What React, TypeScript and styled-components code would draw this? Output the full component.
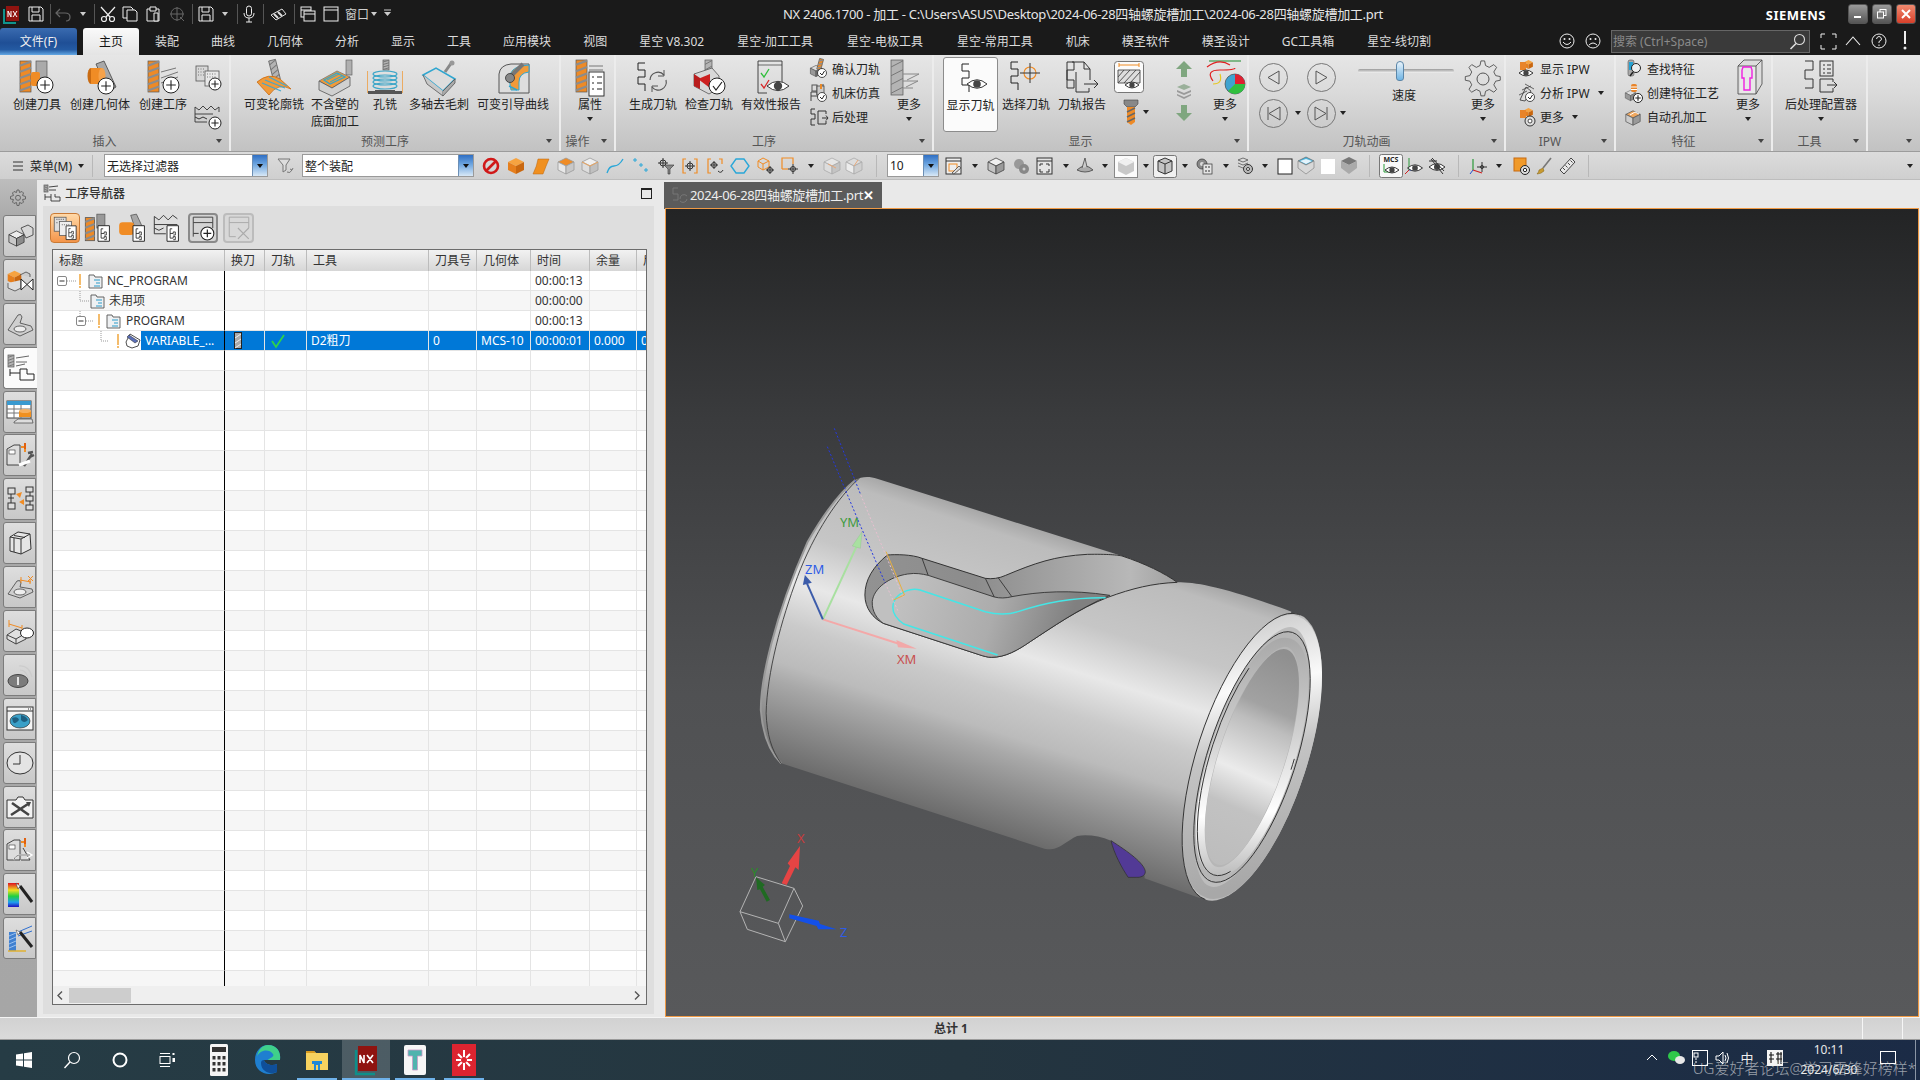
import React from 'react';
import styled, { createGlobalStyle } from 'styled-components';

const FONT = `"Noto Sans", "Noto Sans CJK SC", sans-serif`;

const GlobalStyle = createGlobalStyle`
  html, body { margin: 0; padding: 0; width: 1920px; height: 1080px; overflow: hidden; background: #d8d8d8; }
  body { font-family: ${FONT}; font-size: 12px; color: #222; }
  * { box-sizing: border-box; }
  svg { display: block; flex: none; overflow: visible; }
`;

const Page = styled.div`width: 1920px; height: 1080px; display: flex; flex-direction: column; overflow: hidden;`;

/* ---------- title bar ---------- */
const TitleBar = styled.div`height: 27px; background: #1a1a1a; display: flex; align-items: center; flex: none;`;
const Qat = styled.div`display: flex; align-items: center; width: 396px; flex: none; height: 27px;`;
const QatCell = styled.div<{ $w: number }>`width: ${p => p.$w}px; display: flex; justify-content: center; align-items: center; flex: none;`;
const QatSep = styled.div`width: 1px; height: 20px; background: #555;`;
const QatText = styled.span`color: #cfcfcf; font-size: 12px;`;
const WindowTitle = styled.div`margin-left: 387px; color: #e6e6e6; font-size: 13px; white-space: nowrap; letter-spacing: -0.3px;`;
const Brand = styled.div`margin-left: auto; color: #fff; font-weight: 700; font-size: 13px; letter-spacing: .5px; margin-right: 22px; margin-top: 3px;`;
const WinBtn = styled.div<{ $close?: boolean }>`
  width: 20px; height: 20px; margin-right: 4px; border-radius: 3px; border: 1px solid #555;
  display: flex; align-items: center; justify-content: center; color: #fff;
  background: ${p => (p.$close ? 'linear-gradient(#f08a70,#d8402a)' : 'linear-gradient(#9a9a9a,#555)')};
`;
const WinBtns = styled.div`display: flex; margin-right: 0;`;

/* ---------- tab bar ---------- */
const TabBar = styled.div`height: 28px; background: #1a1a1a; display: flex; align-items: flex-end; flex: none;`;
const FileTab = styled.div`
  width: 77px; height: 27px; margin-right: 6px; border-radius: 3px 3px 0 0; color: #f0f0f0; padding-bottom: 2px;
  background: linear-gradient(#3a6bb0 0%, #1f4f96 55%, #245aa2 80%, #63a8e4 100%);
  display: flex; align-items: center; justify-content: center; font-size: 12px;
`;
const Tab = styled.div<{ $active?: boolean; $wide?: boolean }>`
  height: 27px; padding: 0 ${p => (p.$wide ? 17 : 16)}px 2px; display: flex; align-items: center; white-space: nowrap; font-size: 12px;
  color: ${p => (p.$active ? '#111' : '#dcdcdc')};
  border-radius: 3px 3px 0 0;
  background: ${p => (p.$active ? 'linear-gradient(#fafafa,#e4e4e4)' : 'transparent')};
`;
const TabTools = styled.div`margin-left: auto; margin-right: 2px; display: flex; align-items: center; height: 28px;`;
const TabToolCell = styled.div<{ $w: number }>`width: ${p => p.$w}px; display: flex; justify-content: center; align-items: center;`;
const SearchBox = styled.div`
  width: 199px; height: 23px; border: 1px solid #666; background: #3a3a3a; color: #8a8a8a;
  display: flex; align-items: center; justify-content: space-between; padding: 0 3px 0 1px; font-size: 12px; margin: 0 6px 0 5px;
`;

/* ---------- ribbon ---------- */
const Ribbon = styled.div`
  height: 97px; flex: none; display: flex;
  background: linear-gradient(#e6e6e6 0%, #dadada 40%, #c2c2c2 100%);
  border-bottom: 1px solid #9c9c9c;
`;
const Group = styled.div<{ $w: number; $last?: boolean }>`
  width: ${p => p.$w}px; flex: none; display: flex; flex-direction: column; margin: 0;
  border-right: ${p => (p.$last ? 'none' : '2px solid #ececec')};
`;
const GroupBody = styled.div<{ $pl?: number }>`height: 77px; display: flex; padding-left: ${p => p.$pl ?? 0}px;`;
const GroupFoot = styled.div`flex: 1; display: flex; align-items: center; color: #555; font-size: 12px; padding-bottom: 1px;`;
const GroupLabel = styled.div`flex: 1; text-align: center;`;
const GroupCaretCell = styled.div`width: 20px; display: flex; justify-content: center;`;
const Caret = styled.i<{ $c?: string }>`
  display: block; width: 0; height: 0; flex: none;
  border-left: 3.5px solid transparent; border-right: 3.5px solid transparent; border-top: 4px solid ${p => p.$c ?? '#222'};
`;
const LargeBtn = styled.div<{ $w: number; $sel?: boolean; $ml?: number }>`
  width: ${p => p.$w}px; flex: none; display: flex; flex-direction: column; align-items: center; text-align: center;
  padding-top: ${p => (p.$sel ? 3 : 5)}px; line-height: 17px; font-size: 12px; color: #222;
  margin-left: ${p => p.$ml ?? 0}px;
  ${p => p.$sel && 'background:#fbfbfb;border:1px solid #8c8c8c;border-radius:3px;height:75px;margin-top:2px;'}
`;
const IconBox = styled.div`height: 36px; display: flex; align-items: center; justify-content: center;`;
const MoreCaretCell = styled.div`margin-top: 4px;`;
const IconCol = styled.div<{ $w: number; $ml?: number }>`
  width: ${p => p.$w}px; flex: none; display: flex; flex-direction: column; align-items: center; margin-left: ${p => p.$ml ?? 0}px;
`;
const SmallCol = styled(IconCol)`padding-top: 9px; gap: 10px;`;
const StackRow = styled.div`display: flex; align-items: center; gap: 4px; margin-left: 14px;`;
const ArrowCol = styled(IconCol)`padding-top: 6px; gap: 6px;`;
const StackCol = styled(IconCol)`padding-top: 6px; gap: 6px;`;
const RowsCol = styled.div<{ $w: number; $ml?: number }>`width: ${p => p.$w}px; flex: none; margin-left: ${p => p.$ml ?? 0}px; padding-top: 2px;`;
const SmallRow = styled.div`height: 24px; display: flex; align-items: center; gap: 2px; white-space: nowrap; font-size: 12px; color: #222;`;
const SmallRowIcon = styled.div`width: 22px; display: flex; justify-content: center; flex: none;`;
const SmallCaret = styled.span`margin-left: 6px;`;
const AnimGrid = styled.div`width: 91px; flex: none; display: grid; grid-template-columns: 29px 19px 29px 14px; grid-template-rows: 36px 36px; padding-top: 4px; align-items: center; justify-items: center;`;
const SliderCol = styled.div`width: 98px; margin-left: 7px; flex: none; display: flex; flex-direction: column; align-items: center; padding-top: 14px;`;
const SliderTrack = styled.div`position: relative; width: 96px; height: 4px; background: linear-gradient(#9a9a9a,#f4f4f4); border-radius: 2px;`;
const SliderThumb = styled.div`
  position: absolute; left: 38px; top: -8px; width: 8px; height: 20px; border-radius: 4px 4px 3px 3px;
  background: linear-gradient(#e9f3fb,#6fb4e4); border: 1px solid #5b86a8;
`;
const SliderLabel = styled.div`margin-top: 13px; margin-left: -4px; font-size: 12px;`;

/* ---------- selection bar ---------- */
const SelBar = styled.div`height: 28px; flex: none; display: flex; align-items: center; padding-left: 12px; background: linear-gradient(#dcdcdc,#cfcfcf); color: #222; border-bottom: 1px solid #bdbdbd;`;
const MenuText = styled.span`margin-left: 6px; font-size: 12px; width: 43px; white-space: nowrap;`;
const MenuCaret = styled.div`width: 16px; display: flex; justify-content: center;`;
const VSep = styled.div<{ $ml?: number }>`width: 1px; height: 22px; background: #f0f0f0; border-left: 1px solid #b8b8b8; margin-left: ${p => p.$ml ?? 0}px; flex: none;`;
const Combo = styled.div<{ $w: number; $ml?: number }>`
  width: ${p => p.$w}px; margin-left: ${p => p.$ml ?? 0}px; height: 23px; flex: none; background: #fff; border: 1px solid #9a9a9a;
  display: flex; align-items: center; font-size: 12px; color: #222;
`;
const ComboText = styled.div`flex: 1; padding-left: 2px; white-space: nowrap;`;
const ComboArrow = styled.div`
  width: 15px; height: 21px; display: flex; align-items: center; justify-content: center;
  background: linear-gradient(#2f6fc4 0%, #6ea6e0 45%, #d8e8f6 100%); border-left: 1px solid #6c8fb5;
`;
const FilterCell = styled.div`width: 34px; display: flex; justify-content: center; flex: none;`;
const Strip = styled.div<{ $ml: number }>`display: flex; align-items: center; margin-left: ${p => p.$ml}px; flex: none;`;
const StripCell = styled.div<{ $w: number }>`width: ${p => p.$w}px; flex: none; display: flex; justify-content: center; align-items: center;`;
const SelEnd = styled.div`margin-left: auto; margin-right: 7px;`;

/* ---------- main ---------- */
const Main = styled.div`height: 837px; flex: none; display: flex;`;
const Rail = styled.div`width: 37px; flex: none; background: linear-gradient(#bdbdbd 0, #a9a9a9 40px, #a6a6a6 100%); display: flex; flex-direction: column; align-items: flex-start;`;
const RailGear = styled.div`height: 35px; width: 36px; display: flex; align-items: center; justify-content: center; padding-top: 1px;`;
const RailBtn = styled.div<{ $active?: boolean }>`
  width: ${p => (p.$active ? 34 : 33)}px; height: 42px; margin: 0 0 1.9px 3px; flex: none;
  border: 1px solid #7c7c7c; border-radius: 3px 0 0 3px; ${p => p.$active && 'border-right:none;'}
  display: flex; align-items: center; justify-content: center;
  background: ${p => (p.$active ? '#fbfbfb' : 'linear-gradient(#dedede,#c8c8c8)')};
`;
const NavPanel = styled.div`width: 628px; flex: none; background: #e9e9e9; display: flex; flex-direction: column;`;
const NavHead = styled.div`height: 26px; flex: none; display: flex; align-items: center; padding: 0 10px 0 7px;`;
const NavTitle = styled.div`margin-left: 4px; font-size: 12px; font-weight: 500; color: #333;`;
const NavMax = styled.div`margin-left: auto; margin-right: 3px; width: 11px; height: 11px; border: 1px solid #222; border-top-width: 2px;`;
const NavInner = styled.div`margin-left: 6px; width: 611px; height: 808px; background: #dedede; padding: 7px 7px 9px 7px; display: flex; flex-direction: column;`;
const NavTools = styled.div`height: 36px; flex: none; display: flex; align-items: flex-start;`;
const NavTool = styled.div<{ $kind?: 'on' | 'box' | 'off'; $w?: number; $ml?: number }>`
  width: ${p => p.$w ?? 30}px; height: 30px; flex: none; display: flex; align-items: center; justify-content: center; border-radius: 4px;
  margin-left: ${p => p.$ml ?? 0}px;
  ${p => p.$kind === 'on' && 'background:linear-gradient(#ffd9a8,#f4954a);border:1px solid #c97a35;'}
  ${p => p.$kind === 'box' && 'background:#d4d4d4;border:2px solid #8a8a8a;'}
  ${p => p.$kind === 'off' && 'background:#d8d8d8;border:2px solid #bcbcbc;'}
`;
const Table = styled.div`flex: 1; min-height: 0; background: #fff; border: 1px solid #6c6c6c; display: flex; flex-direction: column; margin-left: 2px; width: 595px;`;
const COLS = '172px 40px 42px 122px 48px 54px 59px 47px 12px';
const HeadRow = styled.div`height: 21px; flex: none; display: grid; grid-template-columns: ${COLS}; background: linear-gradient(#f2f2f2,#d6d6d6); overflow: hidden;`;
const HeadCell = styled.div`border-right: 1px solid #bcbcbc; padding-left: 6px; line-height: 21px; font-size: 12px; color: #333; white-space: nowrap; overflow: hidden;`;
const Rows = styled.div`flex: 1; min-height: 0; overflow: hidden;`;
const Row = styled.div<{ $alt?: boolean; $sel?: boolean }>`
  height: 20px; display: grid; grid-template-columns: ${COLS};
  background: ${p => (p.$sel ? '#0078d7' : p.$alt ? '#f6f6f6' : '#fff')};
  color: ${p => (p.$sel ? '#fff' : '#333')};
`;
const Cell = styled.div<{ $pl?: number }>`
  border-right: 1px solid #e4e4e4; border-bottom: 1px solid #e4e4e4; padding-left: ${p => p.$pl ?? 4}px; font-size: 12px; line-height: 19px;
  white-space: nowrap; overflow: hidden; display: flex; align-items: center;
`;
const TreeCell = styled.div`
  border-right: 1px solid #000; border-bottom: 1px solid #e4e4e4; display: flex; align-items: center; font-size: 12px; line-height: 19px; background: #fff; color: #333;
  white-space: nowrap; overflow: hidden;
`;
const TreeCellAlt = styled(TreeCell)`background: #f6f6f6;`;
const TreeLabel = styled.span`margin-left: 1px;`;
const TreeSelected = styled.div`flex: 1; align-self: stretch; background: #0078d7; color: #fff; padding-left: 4px; display: flex; align-items: center;`;
const ScrollBar = styled.div`height: 18px; flex: none; background: #efefef; display: flex; align-items: center; padding-left: 4px; padding-right: 6px;`;
const ScrollThumb = styled.div`width: 62px; height: 15px; background: #cdcdcd; margin-left: 6px;`;
const ScrollEnd = styled.div`margin-left: auto;`;
const GraphicsCol = styled.div`flex: 1; display: flex; flex-direction: column; background: #e9e9e9;`;
const TabStrip = styled.div`height: 28px; flex: none; display: flex; align-items: flex-end; border-bottom: 0; padding-top: 1px;`;
const DocTab = styled.div`
  width: 218px; height: 27px; background: #5b5b5b; color: #eee; display: flex; align-items: center; font-size: 13px; margin-left: -1px; white-space: nowrap; padding-left: 7px; margin-bottom: -1px;
`;
const DocText = styled.span`margin-left: 1px; letter-spacing: -0.35px; padding-bottom: 2px;`;
const DocClose = styled.span`margin-left: auto; margin-right: 8px; font-weight: 700; font-size: 13px; color: #fff; padding-bottom: 2px;`;
const Viewport = styled.div`
  margin: 0 1px 0 0; flex: 1; min-height: 0; border: 1px solid #f09a45;
  background: linear-gradient(#232425 0%, #3a3b3d 26%, #505153 60%, #58595b 100%);
`;

/* ---------- status + taskbar ---------- */
const StatusBar = styled.div`height: 23px; flex: none; display: flex; background: linear-gradient(#d2d2d2,#dadada); border-top: 1px solid #f4f4f4; border-bottom: 1px solid #9a9a9a;`;
const StatusMain = styled.div`width: 1862px; padding-left: 40px; text-align: center; font-weight: 700; font-size: 12px; line-height: 21px; color: #333;`;
const StatusCell = styled.div<{ $w: number }>`width: ${p => p.$w}px; border-left: 1px solid #f6f6f6;`;
const Taskbar = styled.div`position: relative; height: 40px; flex: none; display: flex; align-items: center; background: linear-gradient(90deg,#263c45 0%,#24353f 50%,#1b2b46 100%);`;
const TaskCell = styled.div<{ $w: number; $on?: boolean; $line?: boolean }>`
  width: ${p => p.$w}px; height: 40px; flex: none; display: flex; align-items: center; justify-content: center;
  background: ${p => (p.$on ? 'rgba(255,255,255,.18)' : 'transparent')};
  box-shadow: ${p => (p.$line ? 'inset 0 -2px 0 #6fb2ea' : 'none')};
`;
const TaskGap = styled.div<{ $w: number }>`width: ${p => p.$w}px; flex: none;`;
const Tray = styled.div`margin-left: auto; display: flex; align-items: center; height: 40px;`;
const TrayCell = styled.div<{ $w: number; $pr?: number }>`width: ${p => p.$w}px; padding-right: ${p => p.$pr ?? 0}px; display: flex; justify-content: center; align-items: center; color: #eee; font-size: 13px; margin-top: -5px;`;
const Clock = styled.div`width: 78px; text-align: center; color: #e8e8e8; font-size: 12px; line-height: 20px;`;
const TrayEnd = styled.div`width: 5px; height: 40px; border-left: 1px solid #8a95a5;`;
const Watermark = styled.div`position: absolute; right: 4px; bottom: 2px; color: rgba(235,235,235,.62); font-size: 15px; line-height: 20px; white-space: nowrap; font-weight: 300;`;

/* ---------- icon helpers ---------- */
const Mill = ({ x, y, w, h, n = 5 }: { x: number; y: number; w: number; h: number; n?: number }) => {
  const s = h / n;
  return (
    <g>
      <rect x={x} y={y} width={w} height={h} fill="#ee8a26" stroke="#555" strokeWidth=".7" />
      {Array.from({ length: n }).map((_, i) => (
        <path key={i} d={`M${x} ${y + i * s + s * 0.75}L${x + w} ${y + i * s + s * 0.1}`} stroke="#8c8c8c" strokeWidth={s * 0.35} />
      ))}
    </g>
  );
};
const GMill = ({ x, y, w, h }: { x: number; y: number; w: number; h: number }) => (
  <g>
    <rect x={x} y={y} width={w} height={h} fill="#b4b4b4" stroke="#555" strokeWidth=".7" />
    {[0, 1, 2, 3].map(i => <path key={i} d={`M${x} ${y + (i + .8) * h / 4}L${x + w} ${y + (i + .1) * h / 4}`} stroke="#777" strokeWidth="1" />)}
  </g>
);
const Plus = ({ x, y, r = 8 }: { x: number; y: number; r?: number }) => (
  <g>
    <circle cx={x} cy={y} r={r} fill="#fff" stroke="#222" strokeWidth="1" />
    <path d={`M${x - r * .6} ${y}H${x + r * .6}M${x} ${y - r * .6}V${y + r * .6}`} stroke="#222" strokeWidth="1.1" />
  </g>
);
const Eye = ({ x, y, w = 12 }: { x: number; y: number; w?: number }) => (
  <g>
    <path d={`M${x - w} ${y}Q${x} ${y - w * .85} ${x + w} ${y}Q${x} ${y + w * .85} ${x - w} ${y}Z`} fill="#fff" stroke="#222" strokeWidth=".9" />
    <circle cx={x} cy={y} r={w * .38} fill="#444" />
  </g>
);
const PathS = ({ x = 0, y = 0, c = '#222' }: { x?: number; y?: number; c?: string }) => (
  <path transform={`translate(${x} ${y})`} d="M8 0H1V7H8V14H1V21H8V28" fill="none" stroke={c} strokeWidth="1" />
);
const Doc = ({ x, y, s = 1 }: { x: number; y: number; s?: number }) => (
  <g transform={`translate(${x} ${y}) scale(${s})`}>
    <path d="M0 0H11L11 15H0Z" fill="#fff" stroke="#222" strokeWidth=".9" />
    <path d="M3 3H5M3 3V12M3 7.5H6V6H8V9H6M3 12H6V10.5H8V13.5H6" fill="none" stroke="#222" strokeWidth=".8" />
  </g>
);
const Svg = ({ s = 20, h, vb, children }: { s?: number; h?: number; vb?: string; children: React.ReactNode }) => (
  <svg width={s} height={h ?? s} viewBox={vb ?? `0 0 ${s} ${h ?? s}`}>{children}</svg>
);
const Cube = ({ x = 0, y = 0, s = 1, t = '#f6a340', l = '#e67f1d', r = '#c9670f', e = 'none' }: any) => (
  <g transform={`translate(${x} ${y}) scale(${s})`} stroke={e} strokeWidth=".8">
    <path d="M10 2L18 6L10 10L2 6Z" fill={t} />
    <path d="M2 6L10 10V18L2 14Z" fill={l} />
    <path d="M18 6L10 10V18L18 14Z" fill={r} />
  </g>
);

const L: Record<string, React.ReactNode> = {
  createTool: <Svg s={40} h={36}><Mill x={3} y={1} w={11} h={31} /><rect x={19} y={1} width={11} height={17} fill="#aaa" stroke="#555" strokeWidth=".7" /><rect x={14} y={12} width={9} height={14} rx="2" fill="#f08c25" /><Plus x={28} y={25} /></Svg>,
  createGeom: <Svg s={40} h={36}><path d="M16 4L24 1L36 27L28 32Z" fill="#a8a8a8" stroke="#444" strokeWidth=".8" /><ellipse cx={11} cy={16} rx={3.5} ry={8} fill="#c96b12" /><rect x={11} y={8} width={11} height={16} fill="#f08c25" /><ellipse cx={22} cy={16} rx={3.5} ry={8} fill="#f6a24a" /><Plus x={26} y={26} /></Svg>,
  createOp: <Svg s={40} h={36}><Mill x={5} y={1} w={11} h={31} /><path d="M18 12L33 8M18 18L35 12M18 23L35 17" stroke="#777" strokeWidth="1" fill="none" /><Plus x={28} y={25} /></Svg>,
  ops1: <Svg s={30} h={28}><rect x={3} y={2} width={12} height={15} fill="#d8d8d8" stroke="#555" strokeWidth=".8" /><rect x={12} y={7} width={14} height={15} fill="#e8e8e8" stroke="#555" strokeWidth=".8" /><path d="M5 5H12M5 8H12M5 11H12M14 10H24M14 13H24" stroke="#777" strokeDasharray="1 1.5" /><Plus x={22} y={20} r={6} /></Svg>,
  ops2: <Svg s={30} h={28}><path d="M2 5L6 8L10 4L14 8L18 4L22 8L26 5" fill="none" stroke="#333" strokeWidth=".9" /><path d="M2 5V20H14M26 5V10M2 12H20" fill="none" stroke="#333" strokeWidth=".9" /><path d="M2 15L6 17L10 15L14 17" fill="none" stroke="#333" /><Plus x={22} y={21} r={6} /></Svg>,
  vc: <Svg s={40} h={36}><g transform="rotate(-14 20 10)"><GMill x={17} y={0} w={7} h={20} /></g><path d="M3 22Q15 12 26 19L37 29Q24 22 15 35Z" fill="#f09a3a" stroke="#c96b12" strokeWidth=".8" /><path d="M8 23L27 31M11 20L31 28M15 17L33 26" stroke="#45a6cc" strokeWidth="1.2" fill="none" /></Svg>,
  floor: <Svg s={40} h={36}><rect x={31} y={0} width={6} height={15} fill="#b0b0b0" stroke="#555" strokeWidth=".6" /><path d="M4 21L22 11L35 17L17 28Z" fill="#f09a3a" stroke="#777" strokeWidth=".8" /><path d="M4 21V30L17 36L35 26V17L17 28Z" fill="#d0d0d0" stroke="#555" strokeWidth=".8" /><path d="M9 20L22 13L30 17L15 24Z" fill="none" stroke="#2fa6d0" strokeWidth="1.2" /><path d="M12 20L24 14M15 22L27 16" stroke="#2fa6d0" /></Svg>,
  hole: <Svg s={40} h={36}><GMill x={18} y={0} w={6} h={10} /><path d="M3 11V33M37 11V33" stroke="#f09a3a" strokeWidth="1.5" /><path d="M3 32H37" stroke="#555" strokeWidth="4" /><rect x={3} y={11} width={7} height={20} fill="#ddd" /><rect x={30} y={11} width={7} height={20} fill="#ddd" />{[14, 18, 22, 26].map(y => <ellipse key={y} cx={20} cy={y} rx={12} ry={3} fill="none" stroke="#3da6c8" strokeWidth="1.2" />)}</Svg>,
  deburr: <Svg s={40} h={36}><path d="M26 12L33 2" stroke="#888" strokeWidth="3" /><circle cx={33} cy={3} r={2.5} fill="#999" /><path d="M4 15L17 8L36 19L24 31Z" fill="#ddd" stroke="#2fa6d0" strokeWidth="1.5" /><path d="M4 15L8 24L24 36L24 31" fill="#c8c8c8" stroke="#555" strokeWidth=".8" /><path d="M24 31L36 19V23L24 36" fill="#aaa" stroke="#555" strokeWidth=".8" /></Svg>,
  guide: <Svg s={40} h={36}><path d="M6 33V14Q7 5 18 4H36V33Z" fill="#ddd" stroke="#555" strokeWidth="1" /><path d="M16 18Q18 8 28 6L36 5V12Q26 13 26 22L26 30H18Z" fill="#f09a3a" stroke="#2fa6d0" strokeWidth="1" /><path d="M18 16L30 4" stroke="#777" strokeWidth="4" /><circle cx={17} cy={18} r={4.5} fill="#888" stroke="#333" strokeWidth=".8" /><path d="M16 26L24 30" stroke="#2fa6d0" strokeWidth="1.4" /></Svg>,
  prop: <Svg s={40} h={36}><Mill x={6} y={0} w={11} h={32} /><path d="M19 6H33M19 10H33" stroke="#777" /><rect x={19} y={12} width={15} height={24} fill="#fff" stroke="#222" strokeWidth=".9" /><path d="M22 17H24M27 17H32M22 23H24M27 23H32M22 29H24M27 29H32" stroke="#222" strokeWidth="1" /></Svg>,
  gen: <Svg s={40} h={36}><PathS x={4} y={3} /><path d="M17 20A8 8 0 0 1 31 15M33 20A8 8 0 0 1 19 27" fill="none" stroke="#555" strokeWidth="1.2" /><path d="M31 10V16H25M19 32V26H25" fill="none" stroke="#555" strokeWidth="1" /></Svg>,
  check: <Svg s={40} h={36}><GMill x={16} y={0} w={7} h={22} /><path d="M5 14L23 8L30 16V28L20 34L5 26Z" fill="#d8d8d8" stroke="#555" strokeWidth=".8" /><path d="M9 19L21 14L21 28Z" fill="#cc2020" /><path d="M5 14V26L11 29V18Z" fill="#b91d1d" /><circle cx={28} cy={26} r={8} fill="#fff" stroke="#222" /><path d="M24 26L27 30L33 22" fill="none" stroke="#222" strokeWidth="1.2" /></Svg>,
  valid: <Svg s={40} h={36}><path d="M7 1H31V25" fill="none" stroke="#333" strokeWidth=".9" /><path d="M7 1V33H16" fill="none" stroke="#333" strokeWidth=".9" /><path d="M7 5H31" stroke="#333" strokeWidth=".7" /><path d="M10 13L13 17L18 9" fill="none" stroke="#2fbf3b" strokeWidth="1.3" /><path d="M10 24L13 28L18 20" fill="none" stroke="#d62a2a" strokeWidth="1.3" /><Eye x={27} y={26} w={11} /></Svg>,
  more1: <Svg s={40} h={36}><GMill x={2} y={0} w={12} h={35} /><path d="M14 14H30L18 20M14 21H29L17 27M14 28H24" fill="none" stroke="#888" strokeWidth="1" /></Svg>,
  showPath: <Svg s={40} h={32}><PathS x={10} y={1} /><Eye x={26} y={21} w={10} /></Svg>,
  pick: <Svg s={40} h={36}><PathS x={4} y={2} /><circle cx={24} cy={13} r={6} fill="none" stroke="#f08c25" strokeWidth="1.1" /><path d="M14 13H34M24 3V23" stroke="#333" strokeWidth="1" /></Svg>,
  report: <Svg s={40} h={36}><path d="M5 2H12V10H5V20H12V28H5Z" fill="none" stroke="#333" /><path d="M10 2H22L28 9V20M10 2" fill="none" stroke="#333" /><path d="M22 2V9H28" fill="none" stroke="#333" /><path d="M14 12V32H27V28" fill="none" stroke="#333" /><path d="M22 24H36M32 20L36 24L32 28" fill="none" stroke="#333" /></Svg>,
  gear: <Svg s={40} h={36}><path d="M18 2H22L23 7L27 9L32 6L35 9L32 14L34 18L39 19V23L34 24L32 28L35 33L32 36L27 33L23 35L22 40H18L17 35L13 33L8 36L5 33L8 28L6 24L1 23V19L6 18L8 14L5 9L8 6L13 9L17 7Z" transform="scale(.92) translate(1.5 -1)" fill="none" stroke="#444" strokeWidth=".9" /><circle cx={20} cy={19} r={6} fill="none" stroke="#444" strokeWidth=".9" /></Svg>,
  legend: <Svg s={40} h={36}><path d="M4 1H36" stroke="#1a8a2a" strokeWidth="1" /><path d="M2 7Q14 -2 25 5M8 21Q0 10 15 10T30 8" fill="none" stroke="#e02020" strokeWidth="1.2" /><path d="M8 24Q18 24 15 14" fill="none" stroke="#e8c820" strokeWidth="1.2" /><circle cx={30} cy={24} r={10} fill="#3fa3d0" stroke="#333" strokeWidth=".6" /><path d="M30 24V14A10 10 0 0 1 40 24Z" fill="#e02030" /><path d="M30 24H40A10 10 0 0 1 23 31Z" fill="#30c040" /></Svg>,
  feat: <Svg s={32} h={36}><path d="M6 6L12 0H30V24L24 34H6Z" fill="#ddd" stroke="#444" strokeWidth=".8" /><path d="M24 6V34M24 6L30 0M6 6H24" stroke="#444" strokeWidth=".8" fill="#aaa" /><rect x={8} y={7} width={15} height={26} fill="#e8e8e8" /><path d="M11 7H19L20 10V18H18V30H12V18H10V10Z" fill="none" stroke="#f020e0" strokeWidth="1.4" /></Svg>,
  post: <Svg s={40} h={36}><path d="M4 1H12V10H4V19H12V28H4" fill="none" stroke="#333" /><rect x={19} y={1} width={13} height={15} fill="none" stroke="#333" /><path d="M22 5H24M26 5H30M22 9H24M26 9H30M22 13H24M26 13H30" stroke="#333" /><path d="M19 19V32H32V28M19 19H32V22M26 25H36M33 22L36 25L33 28" fill="none" stroke="#333" /></Svg>,
};

const S: Record<string, React.ReactNode> = {
  check1: <Svg s={20}><Cube s={.7} y={5} t="#ddd" l="#999" r="#777" e="#444" /><g transform="rotate(15 12 6)"><Mill x={9} y={0} w={4} h={11} n={3} /></g><circle cx={13} cy={14} r={4.5} fill="#fff" stroke="#222" strokeWidth=".8" /><path d="M11 14L13 16L15.5 12" fill="none" stroke="#222" /></Svg>,
  check2: <Svg s={20}><rect x={3} y={2} width={5} height={6} fill="none" stroke="#555" /><path d="M2 18V9H8V14M2 13H7M14 1V5" stroke="#444" fill="none" /><rect x={8} y={3} width={7} height={9} fill="#ccc" stroke="#444" strokeWidth=".8" /><rect x={11} y={1} width={2} height={5} fill="#e88a2a" /><circle cx={13} cy={14} r={4.5} fill="#fff" stroke="#222" strokeWidth=".8" /><path d="M11 14L13 16L15.5 12" fill="none" stroke="#222" /></Svg>,
  check3: <Svg s={20}><path d="M6 2H2V7H6V12H2V18H6" fill="none" stroke="#333" /><path d="M9 4V17H17V14M9 4H17V7M13 11H19M17 8.5L19 11L17 13.5" fill="none" stroke="#333" /></Svg>,
  ipw1: <Svg s={20}><Cube x={6} y={0} s={.55} /><rect x={3} y={3} width={6} height={8} fill="#e8842a" /><Eye x={9} y={14} w={7} /></Svg>,
  ipw2: <Svg s={20}><path d="M3 17L9 4L14 8L8 18Z" fill="#ddd" stroke="#333" strokeWidth=".8" /><path d="M8 1L17 6M5 7L14 3M2 12L10 8" stroke="#444" strokeWidth=".8" /><circle cx={13} cy={14} r={4.5} fill="#fff" stroke="#222" strokeWidth=".8" /><path d="M11 14L13 16L15.5 12" fill="none" stroke="#222" /></Svg>,
  ipw3: <Svg s={20}><Cube x={6} y={0} s={.55} /><rect x={3} y={3} width={6} height={8} fill="#e8842a" /><circle cx={13} cy={14} r={5} fill="#ddd" stroke="#222" strokeWidth=".9" /><circle cx={13} cy={14} r={2} fill="#fff" stroke="#222" strokeWidth=".8" /></Svg>,
  find: <Svg s={20}><rect x={4} y={1} width={6} height={16} rx="2" fill="#aaa" stroke="#555" strokeWidth=".6" /><rect x={5} y={3} width={4} height={8} fill="#27a3d4" /><circle cx={12} cy={9} r={4.5} fill="#eee" stroke="#222" /><path d="M9 13L6 17" stroke="#222" strokeWidth="1.4" /></Svg>,
  craft: <Svg s={20}><Cube y={6} s={.65} t="#ddd" l="#999" r="#888" e="#555" /><rect x={7} y={1} width={6} height={8} rx="2" fill="#e8842a" /><path d="M7 4H13M7 6.5H13" stroke="#fff" /><Plus x={14} y={15} r={4.5} /></Svg>,
  auto: <Svg s={20}><Cube y={2} s={.9} t="#f0a860" l="#ccc" r="#999" e="#555" /><path d="M6 8L11 5L15 7" stroke="#fff" fill="none" /></Svg>,
  box1: <Svg s={30} h={32}><rect x=".5" y=".5" width="29" height="31" rx="3" fill="#fbfbfb" stroke="#777" /><path d="M5 4H25M5 2V6M25 2V6" stroke="#f08c25" strokeWidth="1" /><path d="M4 9H26V22H4Z" fill="#ddd" stroke="#333" strokeWidth=".8" /><path d="M4 16L10 9M4 22L16 9M10 22L22 9M16 22L26 11" stroke="#444" strokeWidth=".9" /><Eye x={18} y={24} w={7} /></Svg>,
  screw: <Svg s={16} h={26}><path d="M1 1H15V5L12 8H4L1 5Z" fill="#888" stroke="#444" strokeWidth=".6" /><rect x={4} y={8} width={8} height={15} fill="#ee8a26" /><path d="M4 13L12 9M4 18L12 14M4 23L12 19" stroke="#666" strokeWidth="1.4" /><path d="M4 23L8 26L12 23" fill="#ee8a26" /></Svg>,
  up: <Svg s={18} h={16}><path d="M9 0L17 8H12V16H6V8H1Z" fill="#7fa67f" /></Svg>,
  down: <Svg s={18} h={16}><path d="M9 16L17 8H12V0H6V8H1Z" fill="#7fa67f" /></Svg>,
  layers: <Svg s={18} h={16}><path d="M9 1L16 4L9 7L2 4Z" fill="#9ab09a" /><path d="M2 7L9 10L16 7V9L9 12L2 9ZM2 11L9 14L16 11V12.5L9 16L2 12.5Z" fill="#9a9a9a" /></Svg>,
};

const circleIcon = (d: string) => (
  <Svg s={29}><circle cx={14.5} cy={14.5} r={14} fill="none" stroke="#777" strokeWidth="1" /><path d={d} fill="none" stroke="#555" strokeWidth="1" /></Svg>
);

const T: Record<string, React.ReactNode> = {
  no: <Svg><circle cx={10} cy={10} r={7} fill="none" stroke="#d01818" strokeWidth="2.6" /><path d="M5 15L15 5" stroke="#d01818" strokeWidth="2.6" /></Svg>,
  cubeO: <Svg><Cube /></Svg>,
  facet: <Svg><path d="M7 3H18Q15 10 12 18H2Q6 10 7 3Z" fill="#f09020" stroke="#b86410" strokeWidth=".5" /></Svg>,
  cubeT: <Svg><Cube t="#f08c25" l="#e8e8e8" r="#c8c8c8" e="#999" /></Svg>,
  cubeW: <Svg><Cube t="#efefef" l="#ddd" r="#c0c0c0" e="#999" /><path d="M2 6L10 10L18 6" fill="none" stroke="#f0a860" /></Svg>,
  curve: <Svg><path d="M2 17Q4 10 9 10T18 3" fill="none" stroke="#2aa7d8" strokeWidth="1.3" /></Svg>,
  pts: <Svg><path d="M3 4H7M5 2V6M9 9H13M11 7V11M14 14H18M16 12V16" stroke="#2aa7d8" strokeWidth="1" /></Svg>,
  tgtF: <Svg><circle cx={7} cy={7} r={3} fill="none" stroke="#333" /><path d="M2 7H12M7 2V12" stroke="#333" /><path d="M8 9H18L14 13V18H12V13Z" fill="#888" stroke="#333" strokeWidth=".6" /></Svg>,
  brk: <Svg><path d="M6 3H3V17H6M14 3H17V17H14" fill="none" stroke="#f08c25" strokeWidth="1.2" /><circle cx={10} cy={10} r={3} fill="none" stroke="#333" /><path d="M5 10H15M10 5V15" stroke="#333" /></Svg>,
  brk2: <Svg><path d="M6 3H3V17H6M14 3H17V8" fill="none" stroke="#f08c25" strokeWidth="1.2" /><circle cx={9} cy={9} r={2.5} fill="none" stroke="#333" /><path d="M5 9H13M9 5V13" stroke="#333" /><path d="M13 15Q16 18 18 14" fill="none" stroke="#333" /></Svg>,
  hex: <Svg><path d="M6 3H14L19 10L14 17H6L1 10Z" fill="none" stroke="#2aa7d8" strokeWidth="1.4" /></Svg>,
  cubeX: <Svg><path d="M2 5L7 2L13 5V11L7 14L2 11ZM2 5L7 8L13 5M7 8V14" fill="none" stroke="#f08c25" /><circle cx={14} cy={14} r={2.5} fill="none" stroke="#333" /><path d="M10 14H18M14 10V18" stroke="#333" /></Svg>,
  sqX: <Svg><path d="M2 13V2H13V8" fill="none" stroke="#f08c25" strokeWidth="1.2" /><path d="M2 13H8" stroke="#f08c25" strokeWidth="1.2" /><circle cx={13} cy={13} r={2.5} fill="none" stroke="#333" /><path d="M8 13H18M13 8V18" stroke="#333" /></Svg>,
  g1: <Svg><Cube t="#e6e6e6" l="#ddd" r="#c4c4c4" e="#aaa" /><path d="M6 8L14 12" stroke="#e8a878" strokeWidth="1" /></Svg>,
  g2: <Svg><Cube t="#ddd" l="#ececec" r="#cfcfcf" e="#aaa" /><path d="M10 10L14 4" stroke="#e8a878" /></Svg>,
  win: <Svg><rect x={2} y={2} width={15} height={16} fill="#eee" stroke="#333" /><path d="M2 5H17" stroke="#333" /><rect x={5} y={8} width={8} height={7} fill="none" stroke="#f08c25" /><path d="M8 17L15 10L17 12L10 18Z" fill="#ddd" stroke="#333" strokeWidth=".7" /></Svg>,
  gcube: <Svg><Cube t="#efefef" l="#c4c4c4" r="#9a9a9a" e="#444" /></Svg>,
  gears: <Svg><circle cx={8} cy={8} r={5} fill="#999" /><circle cx={13} cy={13} r={5} fill="#888" /><circle cx={13} cy={13} r={1.5} fill="#ccc" /></Svg>,
  fit: <Svg><rect x={2} y={2} width={15} height={16} fill="#e4e4e4" stroke="#333" /><path d="M2 5H17" stroke="#333" /><path d="M5 8H8M5 8V10M14 8H11M14 8V10M5 16H8M5 16V13M14 16H11M14 16V13" stroke="#333" fill="none" /></Svg>,
  cone: <Svg><path d="M2 14Q10 6 18 14Q10 18 2 14Z" fill="#aaa" stroke="#444" strokeWidth=".8" /><path d="M7 12L10 2L12 11" fill="#ccc" stroke="#444" strokeWidth=".8" /></Svg>,
  shaded: <Svg s={24} h={24}><rect x=".5" y="1.5" width="23" height="22" fill="#fbfbfb" stroke="#888" /><path d="M12 4L20 8V17L12 21L4 17V8Z" fill="#c8c8c8" /><path d="M4 8L12 12L20 8L12 4Z" fill="#f0f0f0" /></Svg>,
  cylbox: <Svg s={24} h={24}><rect x=".5" y="1.5" width="23" height="22" rx="2" fill="#f0f0f0" stroke="#777" /><path d="M5 7L12 4L19 7V17L12 20L5 17Z" fill="#c4c4c4" stroke="#333" /><path d="M5 7L12 10L19 7M12 10V20" fill="none" stroke="#333" /></Svg>,
  layer: <Svg><circle cx={7} cy={8} r={5} fill="#888" stroke="#333" strokeWidth=".7" /><circle cx={7} cy={8} r={2} fill="#ddd" /><rect x={8} y={8} width={9} height={10} fill="#e4e4e4" stroke="#333" strokeWidth=".7" /><path d="M11 10V12M14 10V12M11 14V16M14 14V16" stroke="#333" /></Svg>,
  gearstack: <Svg><path d="M3 4L8 2L13 4L8 6ZM3 7L8 9L13 7M3 10L8 12L13 10" fill="#ddd" stroke="#444" strokeWidth=".7" /><circle cx={13} cy={13} r={4.5} fill="#bbb" stroke="#333" /><circle cx={13} cy={13} r={1.5} fill="#fff" stroke="#333" /></Svg>,
  wbox: <Svg><rect x={3} y={3} width={14} height={15} fill="#fff" stroke="#222" /></Svg>,
  eyecube: <Svg><path d="M10 1L18 5L10 9L2 5Z" fill="#4fb8e0" stroke="#555" strokeWidth=".6" /><path d="M4 5L10 3L16 5L10 8Z" fill="#e4f3fb" /><path d="M2 5V12L10 18L18 12V5L10 9Z" fill="#d8d8d8" stroke="#777" strokeWidth=".6" /></Svg>,
  wsq: <Svg><rect x={3} y={3} width={14} height={15} fill="#fff" /></Svg>,
  graycube: <Svg><path d="M10 1L18 5L10 9L2 5Z" fill="#777" /><path d="M2 5V12L10 18L18 12V5L10 9Z" fill="#aaa" /></Svg>,
  mcs: <Svg s={24} h={24}><rect x=".5" y=".5" width="23" height="23" rx="2" fill="#f8f8f8" stroke="#777" /><text x="12" y="8" fontSize="7" textAnchor="middle" fill="#222" fontFamily="Noto Sans" fontWeight="700">MCS</text><path d="M5 10V18M5 18H13" stroke="#2a9a3a" /><Eye x={13} y={16} w={7} /></Svg>,
  eyeaxis: <Svg><path d="M5 2V14" stroke="#2a9a3a" /><path d="M5 14L1 18" stroke="#d02020" /><path d="M5 14H9" stroke="#2050d0" /><Eye x={11} y={12} w={7.5} /></Svg>,
  eyeoff: <Svg><Eye x={10} y={11} w={8} /><path d="M4 3L16 18M2 5H10M5 2L17 15" stroke="#333" /></Svg>,
  axes: <Svg><path d="M4 14V3" stroke="#2a9a3a" strokeWidth="1.2" /><path d="M4 14L13 17" stroke="#d02020" strokeWidth="1.2" /><path d="M4 14L1 18" stroke="#2050d0" /><circle cx={13} cy={11} r={1.5} fill="none" stroke="#333" /><path d="M8 11H18M13 6V16" stroke="#333" /></Svg>,
  ocube: <Svg><rect x={3} y={2} width={12} height={13} fill="#f09a2a" stroke="#c86a10" /><circle cx={14} cy={14} r={4.5} fill="#ddd" stroke="#222" /><circle cx={14} cy={14} r={1.7} fill="#fff" stroke="#222" /></Svg>,
  brush: <Svg><path d="M17 2L9 12" stroke="#777" strokeWidth="1.6" /><path d="M5 14L9 12L10 15Q7 18 3 18Q5 16 5 14Z" fill="#c89a30" stroke="#806010" strokeWidth=".5" /></Svg>,
  ruler: <Svg><path d="M3 14L14 2L18 6L7 18Z" fill="#e8e8e8" stroke="#444" /><path d="M6 12L8 14M8.500 9.500L10.500 11.500M11 7L13 9M13.500 4.500L15.500 6.500" stroke="#444" /></Svg>,
};

const R: Record<string, React.ReactNode> = {
  r1: <Svg s={28}><Cube x={1} y={7} s={.95} t="#ececec" l="#c8c8c8" r="#8c8c8c" e="#333" /><path d="M15 6L22 3L27 6V13L20 16Z" fill="#d8d8d8" stroke="#333" strokeWidth=".8" /></Svg>,
  r2: <Svg s={28}><Cube x={0} y={3} s={.85} /><path d="M14 9L20 6L24 8V11" fill="#ccc" stroke="#333" strokeWidth=".7" /><path d="M2 17V22L9 25L15 22V14" fill="#ddd" stroke="#333" strokeWidth=".7" /><path d="M15 13L27 24V13L15 24Z" fill="#fff" stroke="#222" strokeWidth="1" /></Svg>,
  r3: <Svg s={28}><path d="M2 20L12 5Q15 3 16 7L14 13L25 16L27 20L14 26Z" fill="#cfcfcf" stroke="#444" strokeWidth=".8" /><ellipse cx={14} cy={19} rx={6} ry={3} fill="#eee" stroke="#444" strokeWidth=".8" /></Svg>,
  r4: <Svg s={28}><GMill x={1} y={1} w={6} h={12} /><path d="M9 4L22 2M9 8H20M9 12L18 10" stroke="#666" /><path d="M3 15V22M3 19H13M13 15V26H27V20H20V15Z" fill="none" stroke="#222" strokeWidth="1" /></Svg>,
  r5: <Svg s={28}><rect x={1} y={3} width={24} height={17} fill="#fff" stroke="#444" /><rect x={1} y={3} width={24} height={4} fill="#3a9ad0" /><path d="M1 11H25M1 15H25M8 7V20M15 7V20" stroke="#777" /><ellipse cx={19} cy={17} rx={6} ry={2} fill="#f09020" /><rect x={13} y={13} width={12} height={6} fill="#f09020" /><ellipse cx={19} cy={13} rx={6} ry={2} fill="#f6b060" /><path d="M8 24L12 21H26L27 25H8Z" fill="#ddd" stroke="#444" strokeWidth=".7" /></Svg>,
  r6: <Svg s={28}><path d="M1 24V8L8 4H14V24Z" fill="#ddd" stroke="#333" strokeWidth=".9" /><rect x={3} y={9} width={6} height={4} fill="#fff" stroke="#333" strokeWidth=".6" /><path d="M15 6H19V11" stroke="#f08c25" strokeWidth="2" fill="none" /><path d="M19 2V8" stroke="#e06010" strokeWidth="2" /><path d="M18 25L26 13M22 12L27 11M24 16L28 14" stroke="#555" strokeWidth="2.4" /><path d="M13 24L24 20" stroke="#fff" strokeWidth="3" /></Svg>,
  r7: <Svg s={28}><rect x={2} y={3} width={7} height={6} fill="#ddd" stroke="#333" /><rect x={2} y={18} width={7} height={6} fill="#ddd" stroke="#333" /><rect x={20} y={2} width={7} height={5} fill="#ddd" stroke="#333" /><rect x={20} y={11} width={7} height={5} fill="#ddd" stroke="#333" /><rect x={20} y={20} width={7} height={5} fill="#ddd" stroke="#333" /><path d="M5 9V18M24 7V11M24 16V20M2 13H8" stroke="#333" /><path d="M10 9L16 7L14 13ZM18 20L13 17L18 14Z" fill="#f08c25" /></Svg>,
  r8: <Svg s={28}><path d="M4 8L12 3L24 5L25 20L15 25L4 22Z" fill="#e6e6e6" stroke="#333" /><path d="M4 8L15 10L24 5M15 10V25M8 6.500L19 8.500M8 9V23" fill="none" stroke="#333" /></Svg>,
  r9: <Svg s={28}><path d="M2 21L11 8Q14 6 15 10L14 14L26 16L27 19L14 25Z" fill="#cfcfcf" stroke="#444" strokeWidth=".8" /><ellipse cx={14} cy={19} rx={6} ry={3} fill="#eee" stroke="#444" strokeWidth=".8" /><path d="M14 7L25 9M15 4V10M24 6V11M22 3L27 8M27 3L22 8" stroke="#f08c25" strokeWidth="1" /></Svg>,
  r10: <Svg s={28}><path d="M1 18L10 12L20 16V22L10 27L1 22Z" fill="#e0e0e0" stroke="#444" /><path d="M1 18L10 22L20 16M10 22V27" fill="none" stroke="#444" /><path d="M3 7L16 11M3 3V10M16 8V14" stroke="#f08c25" /><ellipse cx={21} cy={16} rx={6.500} ry={5} fill="#fff" stroke="#222" /></Svg>,
  r11: <Svg s={28}><path d="M13 5Q23 4 26 16M14 9Q20 9 22 17" stroke="#ccc" fill="none" strokeWidth="1.2" /><ellipse cx={12} cy={20} rx={10} ry={6.500} fill="#7c7c7c" stroke="#444" /><path d="M12 16V24" stroke="#fff" strokeWidth="1.6" /></Svg>,
  r12: <Svg s={28}><rect x={1} y={2} width={26} height={23} fill="#f4f4f4" stroke="#333" /><path d="M1 6H27" stroke="#333" /><path d="M22 4H25" stroke="#333" strokeDasharray="1 1" /><ellipse cx={14} cy={16} rx={10} ry={7} fill="#3aa0c8" stroke="#333" strokeWidth=".7" /><path d="M6 13Q12 11 13 15Q9 20 7 17ZM15 10Q20 11 22 15Q18 19 15 15Z" fill="#1e5f80" /></Svg>,
  r13: <Svg s={28}><ellipse cx={14} cy={14} rx={13} ry={11} fill="#e4e4e4" stroke="#333" /><path d="M14 6V15H7" fill="none" stroke="#333" /></Svg>,
  r14: <Svg s={28}><path d="M1 7H10L12 4H17L19 7H27V25H1Z" fill="#f2f2f2" stroke="#333" /><path d="M5 22L22 11M6 10L23 22" stroke="#444" strokeWidth="2.6" /><path d="M20 9L25 9L23 14" fill="#444" /></Svg>,
  r15: <Svg s={28}><path d="M1 24V8L8 4H14V24Z" fill="#ddd" stroke="#333" strokeWidth=".9" /><rect x={3} y={9} width={6} height={4} fill="#fff" stroke="#333" strokeWidth=".6" /><path d="M15 6H19V11" stroke="#f08c25" strokeWidth="2" fill="none" /><path d="M19 2V8" stroke="#e06010" strokeWidth="2" /><path d="M17 12L24 24H15" fill="#ddd" stroke="#333" strokeWidth=".9" /><path d="M8 24Q9 19 15 19H24M21 16L26 19L21 22" fill="none" stroke="#fff" strokeWidth="1.4" /><path d="M8 24Q9 19 15 19H24" fill="none" stroke="#222" strokeWidth=".6" /></Svg>,
  r16: <Svg s={28}><defs><linearGradient id="rb" x1="0" y1="0" x2="0" y2="1"><stop offset="0" stopColor="#e01020" /><stop offset=".3" stopColor="#f0e020" /><stop offset=".55" stopColor="#20d040" /><stop offset=".8" stopColor="#20a0f0" /><stop offset="1" stopColor="#2010c0" /></linearGradient></defs><rect x={2} y={3} width={11} height={24} fill="url(#rb)" /><path d="M14 6L26 22" stroke="#222" strokeWidth="3" /><path d="M10 3L14 6L12 9Z" fill="#fff" stroke="#333" strokeWidth=".5" /></Svg>,
  r17: <Svg s={28}><rect x={3} y={8} width={7} height={19} fill="#4080d0" /><path d="M3 12L10 9M3 16L10 13M3 20L10 17M3 24L10 21" stroke="#9ac0ee" /><path d="M2 27H20" stroke="#e0b030" strokeWidth="1.5" /><path d="M12 8L26 2M12 12L26 7" stroke="#3070d0" /><path d="M14 8L26 23" stroke="#222" strokeWidth="3" /><path d="M10 6L14 8L12 11Z" fill="#fff" stroke="#333" strokeWidth=".5" /></Svg>,
};

const tree = (k: 'root' | 'unused' | 'prog' | 'op') => {
  const Dots = ({ d }: { d: string }) => <path d={d} fill="none" stroke="#999" strokeDasharray="1 1" />;
  const Bar = ({ x }: { x: number }) => <path d={`M${x} 3V14M${x} 15V17`} stroke="#f0a030" strokeWidth="1.4" />;
  const Minus = ({ x }: { x: number }) => <g><rect x={x - 4.5} y={5.5} width={9} height={9} rx="1.5" fill="#fff" stroke="#888" /><path d={`M${x - 2.5} 10H${x + 2.5}`} stroke="#333" /></g>;
  const Folder = ({ x }: { x: number }) => (
    <g transform={`translate(${x} 3)`}>
      <path d="M0 1H5L6 3H13V14H0Z" fill="#eef0f2" stroke="#555" strokeWidth=".9" />
      <path d="M5 6H11M7 9H11M5 12H11" stroke="#2a9ac8" strokeWidth="1.2" />
    </g>
  );
  if (k === 'root') return <Svg s={53} h={20}><Minus x={9} /><Dots d="M14 10H23" /><Bar x={27} /><Folder x={36} /></Svg>;
  if (k === 'unused') return <Svg s={55} h={20}><Dots d="M27 0V10H36" /><Folder x={38} /></Svg>;
  if (k === 'prog') return <Svg s={72} h={20}><Dots d="M27 0V5" /><Minus x={28} /><Dots d="M33 10H41" /><Bar x={46} /><Folder x={54} /></Svg>;
  return (
    <Svg s={88} h={20}>
      <Dots d="M48 0V10H56" /><Bar x={65} />
      <path d="M73 11L77 3L87 9L85 15L79 17L74 15Z" fill="#fff" stroke="#222" strokeWidth=".8" />
      <path d="M76 4L85 10L82 12L74 6Z" fill="#5a6fb8" stroke="#222" strokeWidth=".5" />
    </Svg>
  );
};

const sel1: [string, number][] = [['no', 492], ['cubeO', 517], ['facet', 541], ['cubeT', 567], ['cubeW', 591], ['curve', 616], ['pts', 640], ['tgtF', 668], ['brk', 690], ['brk2', 717], ['hex', 741], ['cubeX', 766], ['sqX', 793], ['^', 811], ['g1', 832], ['g2', 856], ['|', 876]];
const sel2: [string, number][] = [['win', 956], ['^', 975.5], ['gcube', 996], ['gears', 1022], ['fit', 1047], ['^', 1066.5], ['cone', 1086], ['^', 1105], ['shaded', 1128], ['^', 1146], ['cylbox', 1166.5], ['^', 1185], ['layer', 1207], ['^', 1226.5], ['gearstack', 1247], ['^', 1264.5], ['wbox', 1286], ['eyecube', 1306.5], ['wsq', 1330], ['graycube', 1350], ['|', 1370.6], ['mcs', 1391], ['eyeaxis', 1416], ['eyeoff', 1439], ['|', 1459.6], ['axes', 1480], ['^', 1499.6], ['ocube', 1521.6], ['brush', 1545], ['ruler', 1569], ['|', 1589]];

const stripCells = (list: [string, number][]) =>
  list.map(([k, c], i) => {
    const l = i === 0 ? c - 12 : (list[i - 1][1] + c) / 2;
    const r = i === list.length - 1 ? c + 12 : (c + list[i + 1][1]) / 2;
    return (
      <StripCell key={i} $w={r - l}>
        {k === '^' ? <Caret /> : k === '|' ? <VSep /> : T[k]}
      </StripCell>
    );
  });

const More = ({ icon, $w, $ml, label = '更多' }: { icon: React.ReactNode; $w: number; $ml?: number; label?: string }) => (
  <LargeBtn $w={$w} $ml={$ml}>
    <IconBox>{icon}</IconBox>
    {label}
    <MoreCaretCell><Caret /></MoreCaretCell>
  </LargeBtn>
);

const Big = ({ icon, $w, children, $ml }: { icon: React.ReactNode; $w: number; $ml?: number; children: React.ReactNode }) => (
  <LargeBtn $w={$w} $ml={$ml}>
    <IconBox>{icon}</IconBox>
    {children}
  </LargeBtn>
);

const Foot = ({ label }: { label?: string }) => (
  <GroupFoot>
    <GroupLabel>{label}</GroupLabel>
    <GroupCaretCell><Caret $c="#444" /></GroupCaretCell>
  </GroupFoot>
);

const PartLabel = styled.text`font-family: ${FONT}; font-size: 13px;`;

const Part = () => {
  const vs = { vectorEffect: 'non-scaling-stroke' as const };
  const E = { cx: 1252, cy: 757, transform: 'rotate(18 1252 757)' };
  return (
    <svg width="1252" height="807" viewBox="666 209 1252 807">
      <defs>
        <linearGradient id="body" gradientUnits="userSpaceOnUse" x1="700" y1="300" x2="380" y2="1121">
          <stop offset="0" stopColor="#a8a8a8" />
          <stop offset=".05" stopColor="#bcbcbc" />
          <stop offset=".25" stopColor="#c6c6c6" />
          <stop offset=".41" stopColor="#e8e8e8" />
          <stop offset=".55" stopColor="#cacaca" />
          <stop offset=".68" stopColor="#bbbbbb" />
          <stop offset=".74" stopColor="#a9a9a9" />
          <stop offset=".85" stopColor="#8e8e8e" />
          <stop offset="1" stopColor="#6c6c6c" />
        </linearGradient>
        <linearGradient id="wall" gradientUnits="userSpaceOnUse" x1="360" y1="0" x2="1120" y2="0">
          <stop offset="0" stopColor="#929292" />
          <stop offset=".35" stopColor="#8c8c8c" />
          <stop offset=".6" stopColor="#a2a2a2" />
          <stop offset=".85" stopColor="#b8b8b8" />
          <stop offset="1" stopColor="#a0a0a0" />
        </linearGradient>
        <linearGradient id="floor" gradientUnits="userSpaceOnUse" x1="450" y1="500" x2="860" y2="600">
          <stop offset="0" stopColor="#c0c0c0" />
          <stop offset=".55" stopColor="#acacac" />
          <stop offset="1" stopColor="#808080" />
        </linearGradient>
        <linearGradient id="fillet" gradientUnits="userSpaceOnUse" x1="1190" y1="640" x2="1320" y2="860">
          <stop offset="0" stopColor="#d0d0d0" />
          <stop offset=".25" stopColor="#fafafa" />
          <stop offset=".5" stopColor="#c4c4c4" />
          <stop offset="1" stopColor="#a8a8a8" />
        </linearGradient>
        <linearGradient id="lip" gradientUnits="userSpaceOnUse" x1="1200" y1="650" x2="1290" y2="875">
          <stop offset="0" stopColor="#a8a8a8" />
          <stop offset=".4" stopColor="#cfcfcf" />
          <stop offset=".72" stopColor="#ffffff" />
          <stop offset="1" stopColor="#b4b4b4" />
        </linearGradient>
        <linearGradient id="bore" gradientUnits="userSpaceOnUse" x1="1262" y1="650" x2="1240" y2="872">
          <stop offset="0" stopColor="#8f8f8f" />
          <stop offset=".25" stopColor="#a2a2a2" />
          <stop offset=".33" stopColor="#bdbdbd" />
          <stop offset=".56" stopColor="#ebebeb" />
          <stop offset=".72" stopColor="#c2c2c2" />
          <stop offset="1" stopColor="#bcbcbc" />
        </linearGradient>
      </defs>
      <g transform="translate(720 420) scale(.40816 .33333)">
        <path {...vs} fill="url(#body)" d="M332 180C345 170 365 168 385 176L985 408C1040 430 1090 460 1120 487C1170 487 1230 500 1400 575L1300 900L1205 1440C1190 1438 1180 1435 1170 1432L1040 1375C1045 1340 1000 1300 958 1262C930 1248 900 1243 875 1248C850 1262 835 1285 810 1288C800 1288 790 1285 780 1280L150 1030C125 1000 105 950 100 870C100 780 130 600 215 365C260 270 300 210 332 180Z" />
        <path {...vs} d="M332 180C300 210 260 270 215 365C130 600 100 780 100 870C105 950 125 1000 150 1030" fill="none" stroke="#9a9a9a" strokeWidth="2" />
        <path {...vs} d="M342 174C290 230 230 340 190 470C150 600 115 760 113 880C115 940 125 990 150 1030" fill="none" stroke="#3a3a3a" strokeWidth=".9" />
        <path {...vs} fill="url(#wall)" stroke="#333" strokeWidth="1" d="M410 405C430 403 470 403 495 415L650 475C665 478 685 475 700 466C770 430 820 408 900 403C950 402 975 405 985 408C1040 430 1090 460 1120 487C1060 490 1010 505 950 532C880 565 810 625 760 665C730 690 700 712 665 712C655 712 645 708 635 704L400 610C375 595 355 565 355 525C355 480 375 440 410 405Z" />
        <path {...vs} fill="url(#floor)" stroke="#333" strokeWidth=".9" d="M460 462C480 458 495 462 510 466L672 531C685 535 700 535 715 530C780 515 860 508 955 526C880 565 810 625 760 665C730 690 700 712 665 712C655 712 645 708 635 704L400 610C385 597 372 575 373 545C376 505 415 470 460 462Z" />
        <path {...vs} d="M495 415L510 466M650 475L672 531M682 474L715 530" fill="none" stroke="#333" strokeWidth=".9" />
        <path {...vs} d="M945 533C880 532 800 545 730 575C710 583 680 585 650 575L490 510C470 502 440 515 428 540C418 565 425 590 450 612L680 705" fill="none" stroke="#45e6e6" strokeWidth="1.5" />
        <path {...vs} d="M280 25L345 225M263 80L338 300M338 300L405 490" fill="none" stroke="#2438e0" strokeWidth="1" strokeDasharray="2 2" />
        <path {...vs} d="M345 225L450 535M405 490L438 578" fill="none" stroke="#e8c0d0" strokeWidth="1" strokeDasharray="2 2" />
        <path {...vs} d="M407 395L452 525L425 540" fill="none" stroke="#e8b040" strokeWidth="1" />
        <path {...vs} d="M252 598L440 672" stroke="#f4a8a8" strokeWidth="2" />
        <path d="M432 660L482 686L436 682Z" fill="#f2a8a8" />
        <path {...vs} d="M252 598L338 370" stroke="#a8e0a0" strokeWidth="2" />
        <path d="M324 378L348 335L344 385Z" fill="#a8e0a0" stroke="#6aa86a" strokeWidth=".5" />
        <path {...vs} d="M252 598L213 490" stroke="#3c5caa" strokeWidth="2" />
        <path d="M203 495L208 465L225 488Z" fill="#3c5caa" />
        <path {...vs} fill="#523a96" stroke="#333" strokeWidth=".8" d="M958 1262C1000 1295 1040 1330 1042 1355C1042 1368 1030 1373 1020 1372L1000 1372C985 1345 965 1300 958 1262Z" />
      </g>
      <ellipse {...E} rx="55" ry="150" fill="#bdbdbd" />
      <ellipse {...E} rx="49" ry="142" fill="none" stroke="url(#fillet)" strokeWidth="12" />
      <ellipse {...E} rx="55" ry="150" fill="none" stroke="#333" strokeWidth=".9" strokeDasharray="0 170 341 171" />
      <ellipse {...E} rx="44" ry="131" fill="#b6b6b6" stroke="#333" strokeWidth=".9" />
      <ellipse {...E} rx="38" ry="120" fill="none" stroke="url(#lip)" strokeWidth="9" />
      <ellipse {...E} rx="41" ry="124" fill="none" stroke="#333" strokeWidth=".9" strokeDasharray="0 120 240 60" />
      <ellipse {...E} rx="33" ry="113" fill="url(#bore)" />
      <g transform="translate(720 820) scale(.33333)">
        <path d="M108 170L222 205L248 258L196 365L82 328L60 275ZM60 275L175 310L222 205M175 310L196 365" fill="none" stroke="#b4b4b4" strokeWidth="3" />
        <path d="M185 190L210 138L203 130L240 78L236 150L226 142L200 195Z" fill="#e64444" />
        <path d="M140 245L120 208L112 210L108 172L135 195L128 200L150 240Z" fill="#1f6a22" />
        <path d="M208 283L296 302L300 312L350 328L295 328L290 318L208 295Z" fill="#1450e8" />
      </g>
      <PartLabel x="840" y="527" fill="#3f9b3f">YM</PartLabel>
      <PartLabel x="805" y="574" fill="#2e5ce6">ZM</PartLabel>
      <PartLabel x="897" y="664" fill="#c85050">XM</PartLabel>
      <PartLabel x="797" y="843" fill="#c83c3c">X</PartLabel>
      <PartLabel x="751" y="877" fill="#2a8a2a" fontSize="11">Y</PartLabel>
      <PartLabel x="840" y="937" fill="#2e5ce6">Z</PartLabel>
    </svg>
  );
};

const navRows: { tree: 'root' | 'unused' | 'prog' | 'op'; label: string; time: string }[] = [
  { tree: 'root', label: 'NC_PROGRAM', time: '00:00:13' },
  { tree: 'unused', label: '未用项', time: '00:00:00' },
  { tree: 'prog', label: 'PROGRAM', time: '00:00:13' },
];

export default function App() {
  return (
    <Page>
      <GlobalStyle />
      <TitleBar>
        <Qat>
          <QatCell $w={22}><Svg s={16} h={18}><path d="M1 4V18H13" stroke="#11938c" strokeWidth="2" fill="none" /><rect x={3} y={1} width={13} height={15} fill="#8f1410" /><path d="M5 12V6L8 12V6M10 6L14 12M14 6L10 12" stroke="#fff" fill="none" /></Svg></QatCell>
          <QatCell $w={28}><Svg s={16}><path d="M1 1H13L15 3V15H1Z" fill="none" stroke="#eee" /><path d="M4 1V6H11V1M4 15V9H12V15" fill="none" stroke="#eee" /></Svg></QatCell>
          <QatSep />
          <QatCell $w={24}><Svg s={16}><path d="M5 3L1 7L5 11M1 7H10Q15 7 15 11T11 15" fill="none" stroke="#666" strokeWidth="1.2" /></Svg></QatCell>
          <QatCell $w={16}><Caret $c="#ccc" /></QatCell>
          <QatCell $w={6}><QatSep /></QatCell>
          <QatCell $w={22}><Svg s={18}><path d="M2 2L11 12M16 2L7 12" stroke="#eee" strokeWidth="1.2" /><circle cx={5} cy={14} r={2.500} fill="none" stroke="#eee" strokeWidth="1.2" /><circle cx={13} cy={14} r={2.500} fill="none" stroke="#eee" strokeWidth="1.2" /></Svg></QatCell>
          <QatCell $w={22}><Svg s={16}><path d="M1 1H9L11 3V12H1Z" fill="none" stroke="#eee" /><path d="M5 4H13L15 6V15H5Z" fill="#1a1a1a" stroke="#eee" /></Svg></QatCell>
          <QatCell $w={24}><Svg s={16}><path d="M2 3H14V15H2Z" fill="none" stroke="#eee" /><path d="M5 1H11V5H5Z" fill="#1a1a1a" stroke="#eee" /><path d="M9 7H13V15H9Z" fill="#1a1a1a" stroke="#eee" /></Svg></QatCell>
          <QatCell $w={24}><Svg s={16}><circle cx={8} cy={8} r={6} fill="none" stroke="#666" /><path d="M1 8H15M8 1V15M11 11L15 15" stroke="#666" /></Svg></QatCell>
          <QatCell $w={6}><QatSep /></QatCell>
          <QatCell $w={22}><Svg s={16}><path d="M1 1H13L15 3V15H1Z" fill="none" stroke="#eee" /><path d="M4 1V6H11V1M4 15V9H12V15" fill="none" stroke="#eee" /></Svg></QatCell>
          <QatCell $w={16}><Caret $c="#ccc" /></QatCell>
          <QatCell $w={8}><QatSep /></QatCell>
          <QatCell $w={16}><Svg s={12} h={18}><rect x={3.500} y={1} width={5} height={10} rx="2.500" fill="none" stroke="#eee" /><path d="M1 8Q1 13 6 13T11 8M6 13V17M3 17H9" fill="none" stroke="#eee" /></Svg></QatCell>
          <QatCell $w={12}><QatSep /></QatCell>
          <QatCell $w={20}><Svg s={18} h={14}><path d="M1 8L12 2L16 7L6 13Z" fill="none" stroke="#ddd" /><path d="M4 7L8 11M8 5L12 9" stroke="#ddd" strokeWidth="2" /></Svg></QatCell>
          <QatCell $w={10}><QatSep /></QatCell>
          <QatCell $w={18}><Svg s={16}><rect x={1} y={1} width={10} height={10} fill="none" stroke="#eee" /><rect x={4} y={5} width={11} height={10} fill="#1a1a1a" stroke="#eee" /><path d="M4 8H15M1 4H11" stroke="#eee" /></Svg></QatCell>
          <QatCell $w={28}><Svg s={16}><rect x={1} y={1} width={14} height={14} fill="none" stroke="#eee" /><path d="M1 4H15" stroke="#eee" /></Svg></QatCell>
          <QatCell $w={24}><QatText>窗口</QatText></QatCell>
          <QatCell $w={10}><Caret $c="#ccc" /></QatCell>
          <QatCell $w={16}><Svg s={7}><path d="M0 0H7" stroke="#ccc" /><path d="M0 2L3.500 6L7 2Z" fill="#ccc" /></Svg></QatCell>
        </Qat>
        <WindowTitle>NX 2406.1700 - 加工 - C:\Users\ASUS\Desktop\2024-06-28四轴螺旋槽加工\2024-06-28四轴螺旋槽加工.prt</WindowTitle>
        <Brand>SIEMENS</Brand>
        <WinBtns>
          <WinBtn><Svg s={8}><path d="M0 7H7" stroke="#fff" strokeWidth="2" /></Svg></WinBtn>
          <WinBtn><Svg s={10}><rect x={3} y={.5} width={6} height={6} fill="none" stroke="#fff" /><rect x={.5} y={3} width={6} height={6} fill="#777" stroke="#fff" /></Svg></WinBtn>
          <WinBtn $close><Svg s={10}><path d="M1 1L9 9M9 1L1 9" stroke="#fff" strokeWidth="2" /></Svg></WinBtn>
        </WinBtns>
      </TitleBar>

      <TabBar>
        <FileTab>文件(F)</FileTab>
        <Tab $active>主页</Tab>
        {['装配', '曲线', '几何体', '分析', '显示', '工具', '应用模块', '视图', '星空 V8.302', '星空-加工工具', '星空-电极工具', '星空-常用工具', '机床', '模圣软件', '模圣设计', 'GC工具箱', '星空-线切割'].map(t => <Tab key={t} $wide={t.includes('-')}>{t}</Tab>)}
        <TabTools>
          <TabToolCell $w={26}><Svg s={16}><circle cx={8} cy={8} r={7} fill="none" stroke="#eee" /><path d="M4 9Q8 14 12 9" fill="none" stroke="#eee" /><circle cx={5.500} cy={6} r={1} fill="#eee" /><circle cx={10.500} cy={6} r={1} fill="#eee" /></Svg></TabToolCell>
          <TabToolCell $w={26}><Svg s={16}><circle cx={8} cy={8} r={7} fill="none" stroke="#eee" /><path d="M4 12Q8 8 12 12" fill="none" stroke="#eee" /><circle cx={5.500} cy={6} r={1} fill="#eee" /><circle cx={10.500} cy={6} r={1} fill="#eee" /></Svg></TabToolCell>
          <SearchBox>搜索 (Ctrl+Space)<Svg s={17}><circle cx={10.500} cy={6.500} r={5} fill="none" stroke="#ddd" strokeWidth="1.1" /><path d="M7 10.500L1.500 16" stroke="#ddd" strokeWidth="1.600" /></Svg></SearchBox>
          <TabToolCell $w={24}><Svg s={15}><path d="M0 4V0H4M11 0H15V4M15 11V15H11M4 15H0V11" fill="none" stroke="#eee" /></Svg></TabToolCell>
          <TabToolCell $w={26}><Svg s={16} h={10}><path d="M1 9L8 1L15 9" fill="none" stroke="#eee" strokeWidth="1.100" /></Svg></TabToolCell>
          <TabToolCell $w={26}><Svg s={16}><circle cx={8} cy={8} r={7} fill="none" stroke="#eee" /><path d="M5.500 6Q6 3.500 8 3.500T10.500 6Q10.500 7.500 8 8.500V10M8 11.500V13" fill="none" stroke="#eee" /></Svg></TabToolCell>
          <TabToolCell $w={26}><Svg s={4} h={20}><path d="M2 0L2 13" stroke="#eee" strokeWidth="2" /><circle cx={2} cy={17} r={1.500} fill="#eee" /></Svg></TabToolCell>
        </TabTools>
      </TabBar>

      <Ribbon>
        <Group $w={231}>
          <GroupBody $pl={8}>
            <Big $w={58} icon={L.createTool}>创建刀具</Big>
            <Big $w={68} icon={L.createGeom}>创建几何体</Big>
            <Big $w={58} icon={L.createOp}>创建工序</Big>
            <SmallCol $w={32}>{L.ops1}{L.ops2}</SmallCol>
          </GroupBody>
          <Foot label="插入" />
        </Group>
        <Group $w={330}>
          <GroupBody $pl={13}>
            <Big $w={60} icon={L.vc}>可变轮廓铣</Big>
            <Big $w={62} icon={L.floor}>不含壁的<br />底面加工</Big>
            <Big $w={38} icon={L.hole}>孔铣</Big>
            <Big $w={70} icon={L.deburr}>多轴去毛刺</Big>
            <Big $w={78} icon={L.guide}>可变引导曲线</Big>
          </GroupBody>
          <Foot label="预测工序" />
        </Group>
        <Group $w={55}>
          <GroupBody $pl={4}>
            <More icon={L.prop} $w={50} label="属性" />
          </GroupBody>
          <Foot label="操作" />
        </Group>
        <Group $w={318}>
          <GroupBody $pl={8}>
            <Big $w={58} icon={L.gen}>生成刀轨</Big>
            <Big $w={54} icon={L.check}>检查刀轨</Big>
            <Big $w={70} icon={L.valid}>有效性报告</Big>
            <RowsCol $w={80} $ml={2}>
              <SmallRow><SmallRowIcon>{S.check1}</SmallRowIcon>确认刀轨</SmallRow>
              <SmallRow><SmallRowIcon>{S.check2}</SmallRowIcon>机床仿真</SmallRow>
              <SmallRow><SmallRowIcon>{S.check3}</SmallRowIcon>后处理</SmallRow>
            </RowsCol>
            <More icon={L.more1} $w={42} />
          </GroupBody>
          <Foot label="工序" />
        </Group>
        <Group $w={315}>
          <GroupBody $pl={9}>
            <LargeBtn $w={55} $sel><IconBox>{L.showPath}</IconBox>显示刀轨</LargeBtn>
            <Big $w={56} icon={L.pick}>选择刀轨</Big>
            <Big $w={56} icon={L.report}>刀轨报告</Big>
            <StackCol $w={38}>
              {S.box1}
              <StackRow>{S.screw}<Caret /></StackRow>
            </StackCol>
            <ArrowCol $w={46} $ml={13}>{S.up}{S.layers}{S.down}</ArrowCol>
            <More icon={L.legend} $w={36} />
          </GroupBody>
          <Foot label="显示" />
        </Group>
        <Group $w={257}>
          <GroupBody $pl={10}>
            <AnimGrid>
              {circleIcon('M20 8L9 14.500L20 21Z')}
              <span />
              {circleIcon('M9 8L20 14.500L9 21Z')}
              <span />
              {circleIcon('M9 8V21M21 8L10 14.500L21 21Z')}
              <Caret />
              {circleIcon('M20 8V21M8 8L19 14.500L8 21Z')}
              <Caret />
            </AnimGrid>
            <SliderCol>
              <SliderTrack><SliderThumb /></SliderTrack>
              <SliderLabel>速度</SliderLabel>
            </SliderCol>
            <More icon={L.gear} $w={44} $ml={6} />
          </GroupBody>
          <Foot label="刀轨动画" />
        </Group>
        <Group $w={110}>
          <GroupBody $pl={10}>
            <RowsCol $w={96}>
              <SmallRow><SmallRowIcon>{S.ipw1}</SmallRowIcon>显示 IPW</SmallRow>
              <SmallRow><SmallRowIcon>{S.ipw2}</SmallRowIcon>分析 IPW<SmallCaret><Caret /></SmallCaret></SmallRow>
              <SmallRow><SmallRowIcon>{S.ipw3}</SmallRowIcon>更多<SmallCaret><Caret /></SmallCaret></SmallRow>
            </RowsCol>
          </GroupBody>
          <Foot label="IPW" />
        </Group>
        <Group $w={157}>
          <GroupBody $pl={7}>
            <RowsCol $w={96}>
              <SmallRow><SmallRowIcon>{S.find}</SmallRowIcon>查找特征</SmallRow>
              <SmallRow><SmallRowIcon>{S.craft}</SmallRowIcon>创建特征工艺</SmallRow>
              <SmallRow><SmallRowIcon>{S.auto}</SmallRowIcon>自动孔加工</SmallRow>
            </RowsCol>
            <More icon={L.feat} $w={58} />
          </GroupBody>
          <Foot label="特征" />
        </Group>
        <Group $w={95}>
          <GroupBody>
            <More icon={L.post} $w={96} label="后处理配置器" />
          </GroupBody>
          <Foot label="工具" />
        </Group>
        <Group $w={51} $last>
          <GroupBody />
          <Foot />
        </Group>
      </Ribbon>

      <SelBar>
        <Svg s={12}><path d="M1 2H11M1 6H11M1 10H11" stroke="#333" /></Svg>
        <MenuText>菜单(M)</MenuText>
        <MenuCaret><Caret /></MenuCaret>
        <VSep $ml={3} />
        <Combo $w={164} $ml={11}>
          <ComboText>无选择过滤器</ComboText>
          <ComboArrow><Caret $c="#111" /></ComboArrow>
        </Combo>
        <FilterCell><Svg s={18}><path d="M2 2H14L10 8V13L7 15V8Z" fill="#ddd" stroke="#777" /><path d="M11 15Q14 17 16 13M14 12L16 13L17 11" fill="none" stroke="#777" /></Svg></FilterCell>
        <Combo $w={172}>
          <ComboText>整个装配</ComboText>
          <ComboArrow><Caret $c="#111" /></ComboArrow>
        </Combo>
        <Strip $ml={5}>{stripCells(sel1)}</Strip>
        <Combo $w={52}>
          <ComboText>10</ComboText>
          <ComboArrow><Caret $c="#111" /></ComboArrow>
        </Combo>
        <Strip $ml={4}>{stripCells(sel2)}</Strip>
        <SelEnd><Caret /></SelEnd>
      </SelBar>

      <Main>
        <Rail>
          <RailGear><Svg s={18}><path d="M8 1H10L10.500 3.500L13 2.500L14.500 4L13.500 6.500L16.500 7.500V10L13.500 10.500L14.500 13L13 14.500L10.500 13.500L10 16.500H8L7.500 13.500L5 14.500L3.500 13L4.500 10.500L1.500 10V7.500L4.500 6.500L3.500 4L5 2.500L7.500 3.500Z" fill="none" stroke="#666" /><circle cx={9} cy={8.800} r={2.500} fill="none" stroke="#666" /></Svg></RailGear>
          {['r1', 'r2', 'r3', 'r4', 'r5', 'r6', 'r7', 'r8', 'r9', 'r10', 'r11', 'r12', 'r13', 'r14', 'r15', 'r16', 'r17'].map(k => (
            <RailBtn key={k} $active={k === 'r4'}>{R[k]}</RailBtn>
          ))}
        </Rail>
        <NavPanel>
          <NavHead>
            <Svg s={17}><GMill x={0} y={0} w={4} h={7} /><path d="M5 2L14 1M5 5H12M1 9V15M1 12H7M7 9V16H16V12H11V9" fill="none" stroke="#333" strokeWidth=".9" /></Svg>
            <NavTitle>工序导航器</NavTitle>
            <NavMax />
          </NavHead>
          <NavInner>
            <NavTools>
              <NavTool $kind="on" $w={30}><Svg s={28} vb="0 0 26 26"><rect x={3} y={3} width={11} height={13} fill="#ddd" stroke="#555" strokeWidth=".7" /><rect x={8} y={7} width={11} height={13} fill="#eee" stroke="#555" strokeWidth=".7" /><path d="M5 5H12M5 8H7M10 10H17" stroke="#777" strokeDasharray="1 1" /><Doc x={14} y={11} s={.85} /></Svg></NavTool>
              <NavTool $w={36}><Svg s={30} vb="0 0 26 26"><Mill x={2} y={4} w={8} h={20} n={4} /><rect x={12} y={1} width={7} height={12} fill="#999" stroke="#555" strokeWidth=".6" /><Doc x={13} y={11} s={.9} /></Svg></NavTool>
              <NavTool $w={34}><Svg s={30} vb="0 0 26 26"><path d="M11 2L16 1L22 14L15 14Z" fill="#a8a8a8" stroke="#444" strokeWidth=".6" /><rect x={1} y={8} width={13} height={11} rx="3" fill="#f08c25" /><Doc x={13} y={11} s={.9} /></Svg></NavTool>
              <NavTool $w={34}><Svg s={30} vb="0 0 26 26"><path d="M2 3L6 6L10 2L14 6L18 2L22 5M2 3V18H12M2 10H22M2 13L6 15L10 13" fill="none" stroke="#333" strokeWidth=".8" /><Doc x={13} y={11} s={.9} /></Svg></NavTool>
              <NavTool $kind="box" $w={30} $ml={4}><Svg s={26} vb="0 0 24 24"><path d="M3 20V2H21V12M3 7H21" fill="none" stroke="#444" strokeWidth=".9" /><path d="M3 17H8" stroke="#444" /><Plus x={16} y={17} r={6} /></Svg></NavTool>
              <NavTool $kind="off" $w={31} $ml={5}><Svg s={26} vb="0 0 24 24"><path d="M3 20V2H21V12M3 7H21M3 20H9" fill="none" stroke="#aaa" strokeWidth=".9" /><path d="M11 12L21 22M21 12L11 22" stroke="#aaa" strokeWidth="1" /></Svg></NavTool>
            </NavTools>
            <Table>
              <HeadRow>
                {['标题', '换刀', '刀轨', '工具', '刀具号', '几何体', '时间', '余量', '后'].map(h => <HeadCell key={h}>{h}</HeadCell>)}
              </HeadRow>
              <Rows>
                {navRows.map((r, i) => {
                  const TC = i % 2 ? TreeCellAlt : TreeCell;
                  return (
                    <Row key={r.label} $alt={i % 2 === 1}>
                      <TC>{tree(r.tree)}<TreeLabel>{r.label}</TreeLabel></TC>
                      <Cell /><Cell /><Cell /><Cell /><Cell />
                      <Cell>{r.time}</Cell>
                      <Cell /><Cell />
                    </Row>
                  );
                })}
                <Row $sel>
                  <TreeCell>{tree('op')}<TreeSelected>VARIABLE_...</TreeSelected></TreeCell>
                  <Cell $pl={9}><Svg s={8} h={17}><rect x={.5} y={.5} width={7} height={16} fill="#aaa" stroke="#222" /><path d="M1 6L7 2M1 11L7 7M1 16L7 12" stroke="#eee" /></Svg></Cell>
                  <Cell $pl={5}><Svg s={16} h={16}><path d="M2 8L6 14L14 2" fill="none" stroke="#2fd24a" strokeWidth="1.800" /></Svg></Cell>
                  <Cell>D2粗刀</Cell>
                  <Cell>0</Cell>
                  <Cell>MCS-10</Cell>
                  <Cell>00:00:01</Cell>
                  <Cell>0.000</Cell>
                  <Cell>0</Cell>
                </Row>
                {Array.from({ length: 32 }).map((_, i) => (
                  <Row key={i} $alt={i % 2 === 1}>
                    {i % 2 ? <TreeCellAlt /> : <TreeCell />}
                    <Cell /><Cell /><Cell /><Cell /><Cell /><Cell /><Cell /><Cell />
                  </Row>
                ))}
              </Rows>
              <ScrollBar>
                <Svg s={6} h={9}><path d="M5 .5L1 4.500L5 8.500" fill="none" stroke="#555" strokeWidth="1.400" /></Svg>
                <ScrollThumb />
                <ScrollEnd><Svg s={6} h={9}><path d="M1 .5L5 4.500L1 8.500" fill="none" stroke="#555" strokeWidth="1.400" /></Svg></ScrollEnd>
              </ScrollBar>
            </Table>
          </NavInner>
        </NavPanel>
        <GraphicsCol>
          <TabStrip>
            <DocTab>
              <Svg s={18}><path d="M7 1H2V7H7V13H2" fill="none" stroke="#777" /><path d="M9 12A4 4 0 0 1 16 9M16 12A4 4 0 0 1 9 14" fill="none" stroke="#777" /></Svg>
              <DocText>2024-06-28四轴螺旋槽加工.prt</DocText>
              <DocClose>✕</DocClose>
            </DocTab>
          </TabStrip>
          <Viewport><Part /></Viewport>
        </GraphicsCol>
      </Main>

      <StatusBar>
        <StatusMain>总计 1</StatusMain>
        <StatusCell $w={40} />
        <StatusCell $w={18} />
      </StatusBar>

      <Taskbar>
        <TaskGap $w={4} />
        <TaskCell $w={40}><Svg s={16}><path d="M0 2.500L7 1.500V7.500H0ZM8 1.300L16 0V7.500H8ZM0 8.500H7V14.500L0 13.500ZM8 8.500H16V16L8 14.700Z" fill="#fff" /></Svg></TaskCell>
        <TaskGap $w={8} />
        <TaskCell $w={40}><Svg s={18}><circle cx={11} cy={7} r={5.500} fill="none" stroke="#fff" strokeWidth="1.200" /><path d="M7 11L1.500 17" stroke="#fff" strokeWidth="1.400" /></Svg></TaskCell>
        <TaskGap $w={8} />
        <TaskCell $w={40}><Svg s={16}><circle cx={8} cy={8} r={6.500} fill="none" stroke="#fff" strokeWidth="2" /></Svg></TaskCell>
        <TaskGap $w={7} />
        <TaskCell $w={40}><Svg s={16}><path d="M1 1.500H11M1 14.500H11" stroke="#fff" /><rect x={1} y={4.500} width={10} height={7} fill="none" stroke="#fff" /><rect x={13.500} y={6} width={2.500} height={4} fill="#fff" /><rect x={13.500} y={1} width={2} height={2} fill="#fff" /></Svg></TaskCell>
        <TaskGap $w={12} />
        <TaskCell $w={40}><Svg s={18} h={32}><rect width={18} height={32} rx="1.500" fill="#f4f4f4" /><rect x={2} y={3} width={14} height={5} fill="#333" />{[12, 18, 24].map(y => [2.500, 7.500, 12.500].map(x => <rect key={`${x}${y}`} x={x} y={y} width={3} height={3.500} fill="#333" />))}</Svg></TaskCell>
        <TaskGap $w={9} />
        <TaskCell $w={40}><Svg s={26} h={30}><path d="M13 0C22 0 26 7 25 15H9C10 20 18 21 22 19V27C12 32 0 27 0 15C0 6 6 0 13 0Z" fill="#1f7fd0" /><path d="M2 12C4 5 14 3 18 9C20 12 14 13 13 15L25 15C26 7 22 0 13 0C7 0 3 5 2 12Z" fill="#3fd08a" /><path d="M9 15C10 20 18 21 22 19V27C16 30 6 27 6 18C6 16 7 15 9 15Z" fill="#0f4f9a" /></Svg></TaskCell>
        <TaskGap $w={9} />
        <TaskCell $w={40} $line><Svg s={24} h={24}><path d="M1 3H9L11 5H23V22H1Z" fill="#f7d25f" /><path d="M1 3H9L11 5H1Z" fill="#d89a20" /><path d="M9 15H15V22H13V17H11V22H9Z" fill="#1f88d8" /><rect x={7} y={13} width={10} height={3} fill="#1f88d8" /></Svg></TaskCell>
        <TaskGap $w={5} />
        <TaskCell $w={48} $on $line><Svg s={22} h={28}><path d="M1 4V28H20" fill="none" stroke="#0f8f8a" strokeWidth="2.400" /><rect x={3} y={0} width={19} height={25} fill="#8f1410" /><path d="M5 17V9L9 17V9M12 9L18 17M18 9L12 17" fill="none" stroke="#fff" strokeWidth="1.600" /></Svg></TaskCell>
        <TaskGap $w={5} />
        <TaskCell $w={40} $line><Svg s={22} h={30}><rect width={22} height={30} rx="2" fill="#f6f6f6" /><path d="M4 5H18V11H13.500V25H8.500V11H4Z" fill="#4fb3ae" stroke="#c89ac8" strokeWidth=".8" /></Svg></TaskCell>
        <TaskGap $w={9} />
        <TaskCell $w={40} $line><Svg s={24} h={32}><rect width={24} height={32} fill="#dc2430" /><g stroke="#fff" strokeWidth="2"><path d="M12 6V26M4 16H20M6 10L18 22M18 10L6 22" /></g><circle cx={12} cy={16} r={3} fill="#dc2430" /></Svg></TaskCell>
        <Tray>
          <TrayCell $w={24}><Svg s={12} h={7}><path d="M1 6L6 1L11 6" fill="none" stroke="#fff" /></Svg></TrayCell>
          <TrayCell $w={24}><Svg s={17} h={13}><ellipse cx={6} cy={5} rx={6} ry={5} fill="#2fc84a" /><ellipse cx={12} cy={9} rx={5} ry={4} fill="#e8e8e8" /></Svg></TrayCell>
          <TrayCell $w={24}><Svg s={16} h={16}><rect x={.5} y={.5} width={15} height={15} fill="none" stroke="#fff" /><rect x={2} y={3} width={4} height={4} fill="none" stroke="#fff" /><path d="M3 9H5M3 12H5" stroke="#fff" /></Svg></TrayCell>
          <TrayCell $w={22}><Svg s={16} h={14}><path d="M1 5H4L8 1V13L4 9H1Z" fill="none" stroke="#fff" /><path d="M10 4Q12 7 10 10M12 2Q15 7 12 12" fill="none" stroke="#fff" /></Svg></TrayCell>
          <TrayCell $w={26}>中</TrayCell>
          <TrayCell $w={30}><Svg s={16}><rect width={16} height={16} fill="#f4f4f4" /><path d="M2 5H7M2 9H7M4 2V13M9 4H15M9 9H15M11 2V14M14 2V14" stroke="#111" strokeWidth="1.100" /></Svg></TrayCell>
          <Clock>10:11<br />2024/6/30</Clock>
          <TrayCell $w={47} $pr={8}><Svg s={16} h={14}><rect x={.5} y={.5} width={15} height={12} fill="none" stroke="#fff" /></Svg></TrayCell>
          <TrayEnd />
        </Tray>
        <Watermark>UG爱好者论坛@学习雷锋好榜样*</Watermark>
      </Taskbar>
    </Page>
  );
}
